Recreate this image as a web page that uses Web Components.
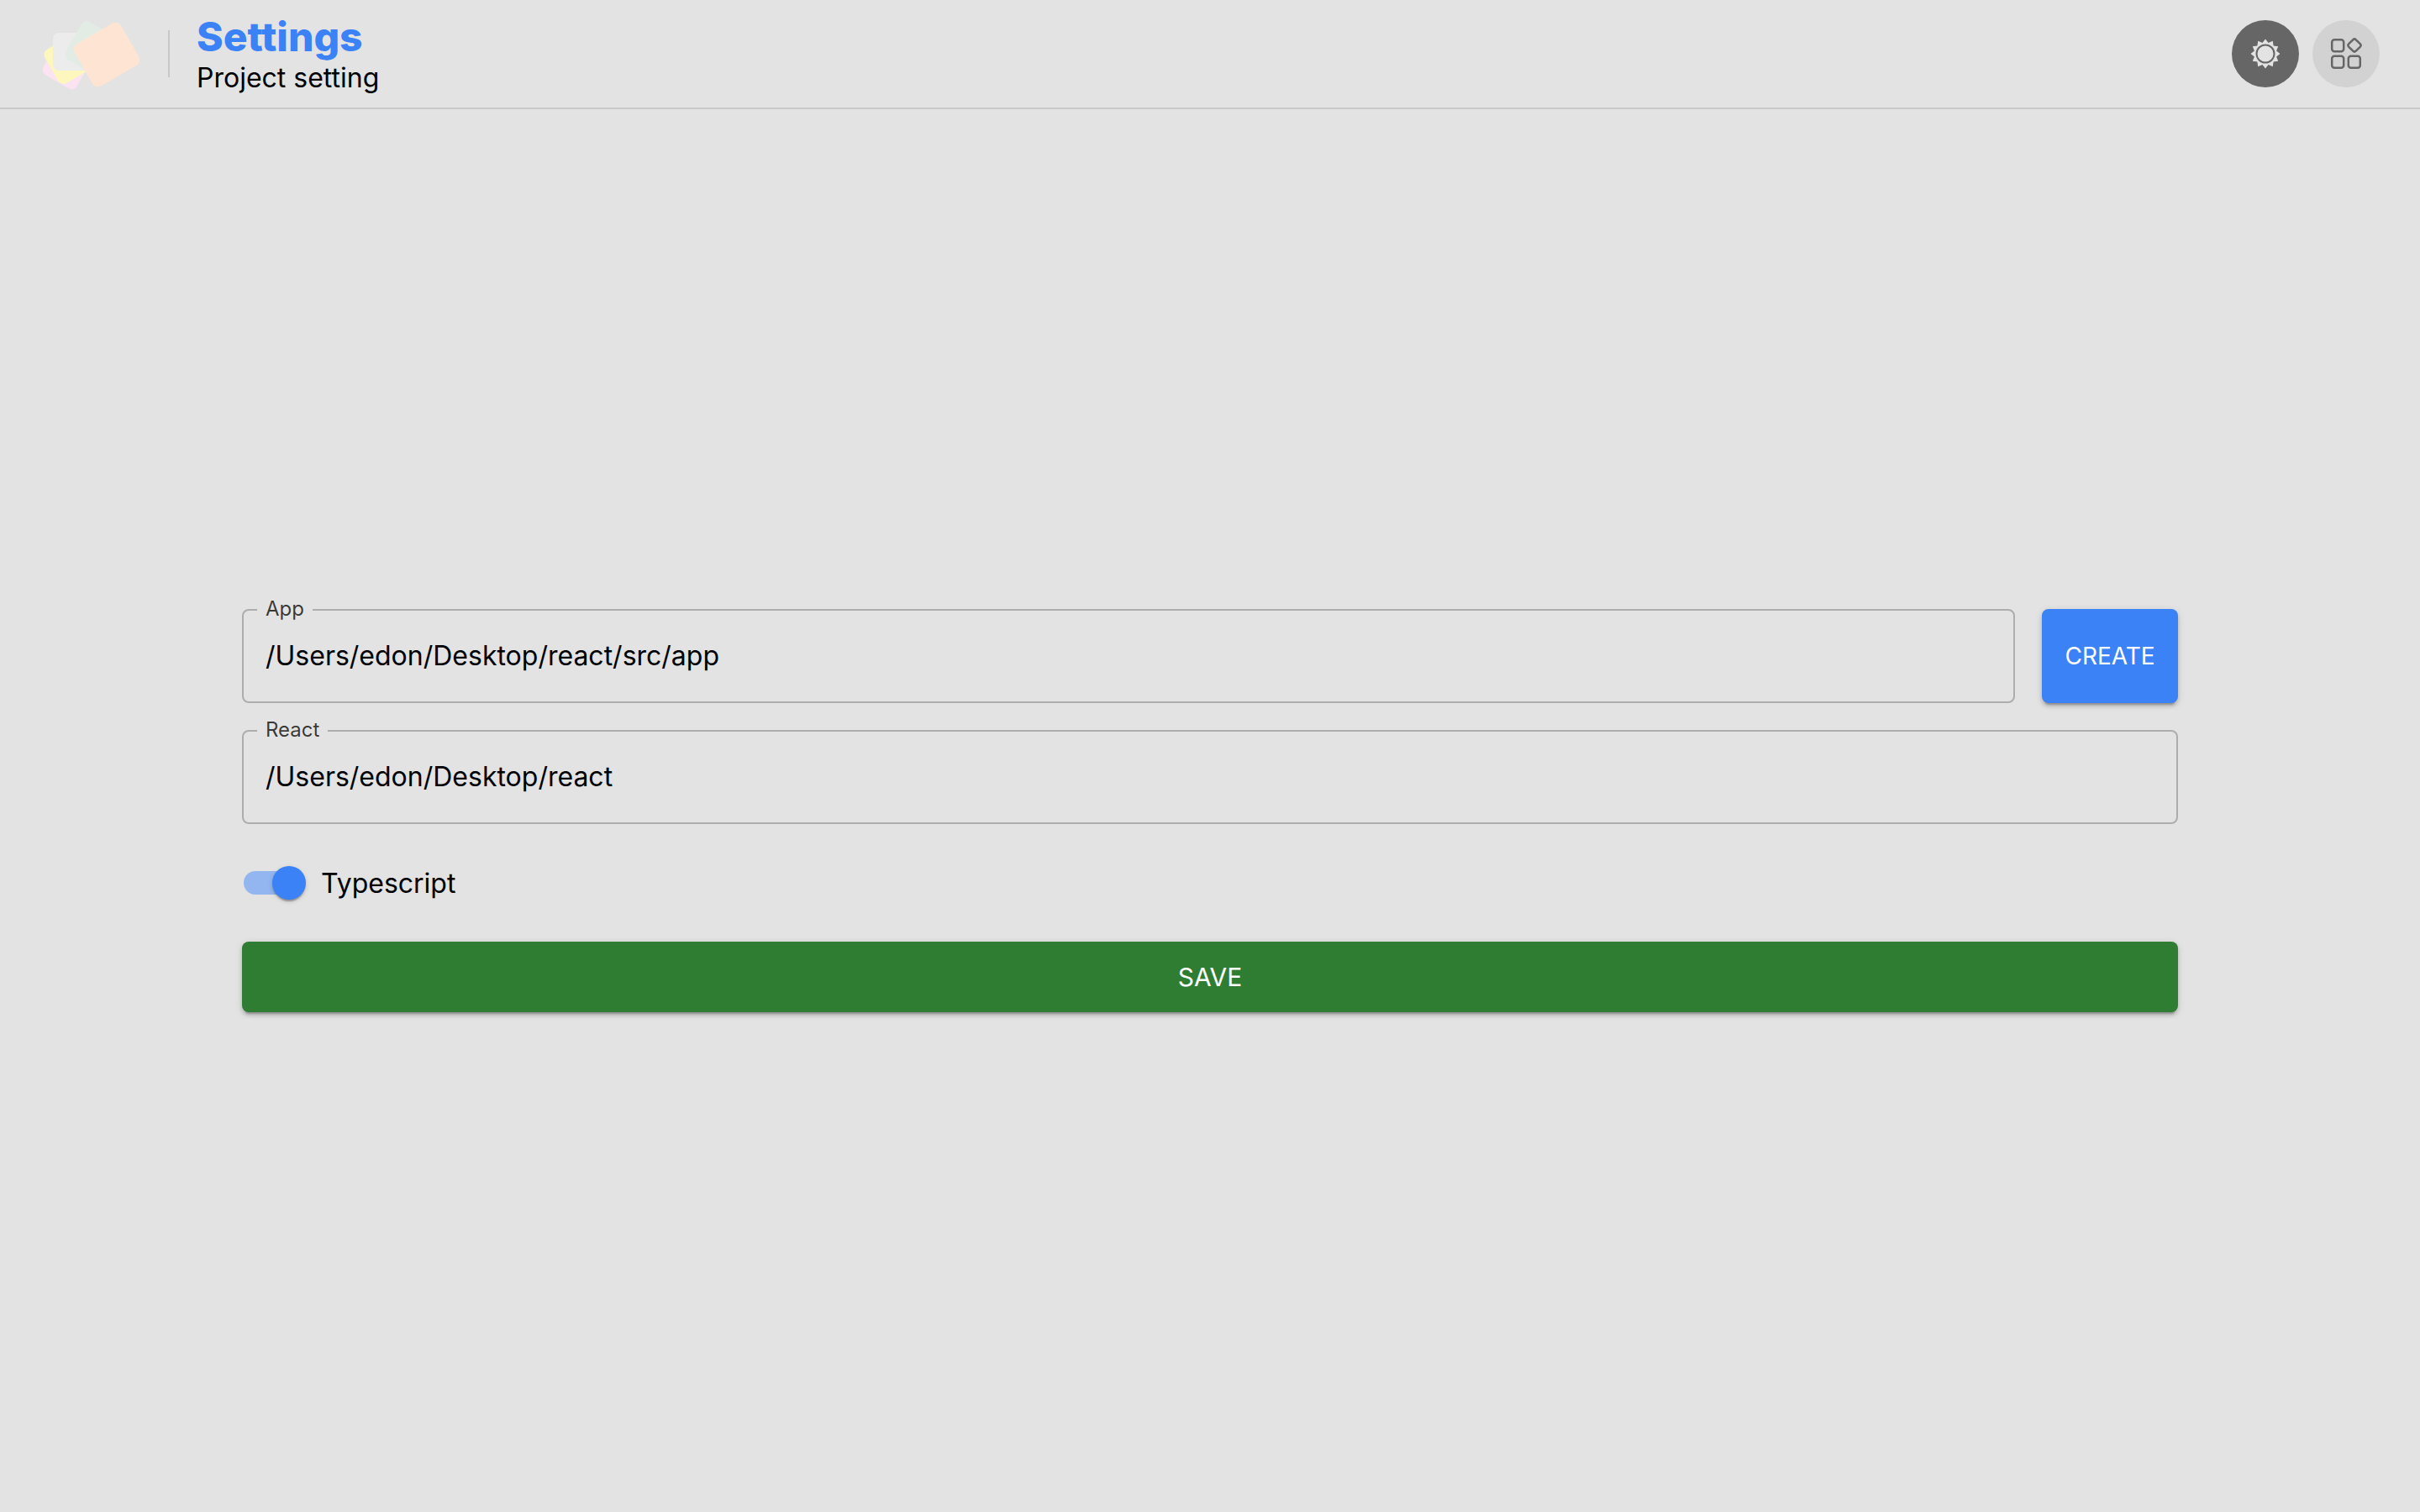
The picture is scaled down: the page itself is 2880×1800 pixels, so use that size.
<!DOCTYPE html>
<html lang="en">
<head>
<meta charset="utf-8">
<title>Settings</title>
<style>
    html, body { height: 100%; }
    body {
        margin: 0;
        background-color: #e3e3e3;
        font-family: Inter, "Liberation Sans", sans-serif;
        color: #000;
    }
</style>
</head>
<body>
<settings-page></settings-page>
<script>
// Small helper so each element gets its own open shadow root from a template
function define (name, html) {
    const template = document.createElement('template')
    template.innerHTML = html
    customElements.define(name, class extends HTMLElement {
        constructor () {
            super()
            this.attachShadow({ mode: 'open' })
                .appendChild(template.content.cloneNode(true))
        }
    })
}

define('logo-mark', `
<style>
    :host { display: block; width: 152px; height: 92px; }
    svg { display: block; }
</style>
<svg width="152" height="92" viewBox="30 18 152 92">
    <rect x="55" y="60" width="46" height="40" rx="7" fill="#fbe3f1" transform="rotate(30 78 80)"/>
    <rect x="58" y="47" width="50" height="46" rx="7" fill="#fdf7be" transform="rotate(-30 83 70)"/>
    <rect x="63" y="39" width="52" height="45" rx="7" fill="#ececec"/>
    <rect x="84" y="32" width="52" height="52" rx="8" fill="#e2ece5" transform="rotate(30 110 58)"/>
    <rect x="95" y="36" width="64" height="58" rx="8" fill="#fee5d3" transform="rotate(-30 127 65)"/>
</svg>
`)

define('page-title', `
<style>
    :host { display: block; }
    h1 {
        margin: 0;
        font-size: 48px;
        line-height: 58px;
        font-weight: 800;
        color: #3b82f6;
    }
    p {
        margin: 0;
        font-size: 32px;
        line-height: 40px;
    }
</style>
<h1><slot name="title"></slot></h1>
<p><slot name="sub"></slot></p>
`)

define('round-button', `
<style>
    :host {
        display: flex;
        align-items: center;
        justify-content: center;
        width: 80px;
        height: 80px;
        border-radius: 50%;
        background-color: #d2d2d2;
    }
    :host([dark]) { background-color: #666; }
</style>
<slot></slot>
`)

define('app-header', `
<style>
    :host {
        display: flex;
        align-items: center;
        box-sizing: border-box;
        height: 130px;
        padding: 0 48px 0 30px;
        border-bottom: 2px solid #c8c8c8;
    }
    .divider {
        width: 2px;
        height: 56px;
        margin: 0 32px 0 0;
        background-color: #c8c8c8;
    }
    .left { display: flex; align-items: center; flex: 1; }
    .left logo-mark { margin-right: 18px; }
    .right { display: flex; gap: 16px; }
    svg { display: block; }
</style>
<div class="left">
    <logo-mark></logo-mark>
    <div class="divider"></div>
    <page-title>
        <span slot="title">Settings</span>
        <span slot="sub">Project setting</span>
    </page-title>
</div>
<div class="right">
    <round-button dark>
        <svg width="40" height="40" viewBox="0 0 40 40">
            <polygon fill="#e3e3e3" points="20,2.5 23.5,6.9 28.8,4.8 29.6,10.4 35.2,11.2 33.1,16.5 37.5,20 33.1,23.5 35.2,28.8 29.6,29.6 28.8,35.2 23.5,33.1 20,37.5 16.5,33.1 11.2,35.2 10.4,29.6 4.8,28.8 6.9,23.5 2.5,20 6.9,16.5 4.8,11.2 10.4,10.4 11.2,4.8 16.5,6.9"/>
            <circle cx="20" cy="20" r="10.5" fill="#e3e3e3" stroke="#666" stroke-width="2"/>
        </svg>
    </round-button>
    <round-button>
        <svg width="40" height="40" viewBox="0 0 40 40" fill="none" stroke="#666" stroke-width="2.5">
            <rect x="3.2" y="3.2" width="14" height="14" rx="3"/>
            <rect x="3.2" y="22.8" width="14" height="14" rx="3"/>
            <rect x="22.8" y="22.8" width="14" height="14" rx="3"/>
            <rect x="24" y="4" width="12" height="12" rx="2.5" transform="rotate(45 30 10)"/>
        </svg>
    </round-button>
</div>
`)

define('text-field', `
<style>
    :host {
        display: block;
        position: relative;
        flex: 1;
        box-sizing: border-box;
        height: 112px;
        border: 2px solid #adadad;
        border-radius: 8px;
        font-size: 32px;
        line-height: 108px;
        padding: 0 26px;
    }
    label {
        position: absolute;
        left: 16px;
        top: -17px;
        padding: 0 10px;
        font-size: 24px;
        line-height: 30px;
        color: rgba(0, 0, 0, .75);
        background-color: #e3e3e3;
    }
</style>
<label><slot name="label"></slot></label>
<slot></slot>
`)

define('raised-button', `
<style>
    :host {
        display: flex;
        align-items: center;
        justify-content: center;
        box-sizing: border-box;
        border-radius: 8px;
        font-size: var(--button-font, 28px);
        color: #fff;
        background-color: var(--button-color, #3b82f6);
        box-shadow: 0 6px 2px -4px rgba(0,0,0,.2), 0 4px 4px 0 rgba(0,0,0,.14), 0 2px 10px 0 rgba(0,0,0,.12);
    }
</style>
<slot></slot>
`)

define('toggle-switch', `
<style>
    :host {
        display: flex;
        align-items: center;
        height: 76px;
        font-size: 32px;
    }
    .track {
        position: relative;
        width: 68px;
        height: 28px;
        margin: 0 24px 0 2px;
        border-radius: 14px;
        background-color: #93b5f0;
    }
    .thumb {
        position: absolute;
        right: -6px;
        top: -6px;
        width: 40px;
        height: 40px;
        border-radius: 50%;
        background-color: #3b82f6;
        box-shadow: 0 4px 2px -2px rgba(0,0,0,.2), 0 2px 2px 0 rgba(0,0,0,.14), 0 2px 6px 0 rgba(0,0,0,.12);
    }
</style>
<div class="track"><div class="thumb"></div></div>
<slot></slot>
`)

define('settings-page', `
<style>
    :host { display: flex; flex-direction: column; height: 100vh; }
    main {
        flex: 1;
        display: flex;
        align-items: center;
        justify-content: center;
    }
    form {
        display: flex;
        flex-direction: column;
        gap: 32px;
        width: 2304px;
    }
    .row { display: flex; gap: 32px; }
    .create { width: 162px; height: 112px; }
    .save { height: 84px; --button-color: #2e7d32; --button-font: 30px; }
</style>
<app-header></app-header>
<main>
    <form>
        <div class="row">
            <text-field><span slot="label">App</span>/Users/edon/Desktop/react/src/app</text-field>
            <raised-button class="create">CREATE</raised-button>
        </div>
        <div class="row">
            <text-field><span slot="label">React</span>/Users/edon/Desktop/react</text-field>
        </div>
        <toggle-switch>Typescript</toggle-switch>
        <raised-button class="save">SAVE</raised-button>
    </form>
</main>
`)
</script>
</body>
</html>
